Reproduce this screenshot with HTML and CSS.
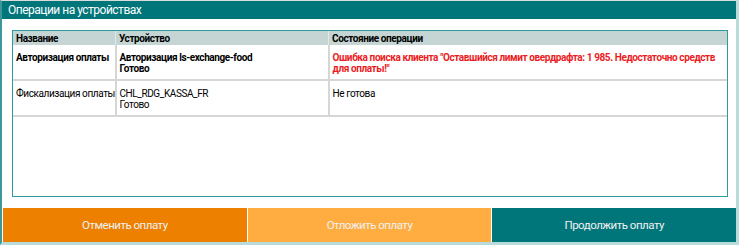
FILE: index.html
```html
<!DOCTYPE html>
<html lang="ru">

<head>
    <meta charset="UTF-8">
    <meta name="viewport" content="width=device-width, initial-scale=1.0">
    <title>Операции на устройствах</title>
    <link rel="stylesheet" href="styles.css">
</head>

<body>
    <div class="dialog">
        <div class="dialog-title">Операции на устройствах</div>

        <div class="dialog-body">
            <div class="ops-box">
                <table class="ops-table">
                    <thead>
                        <tr>
                            <th class="col-name">Название</th>
                            <th class="col-device">Устройство</th>
                            <th>Состояние операции</th>
                        </tr>
                    </thead>
                    <tbody>
                        <tr>
                            <td class="is-bold">Авторизация оплаты</td>
                            <td class="is-bold">Авторизация ls-exchange-food<br>Готово</td>
                            <td class="is-error">Ошибка поиска клиента "Оставшийся лимит овердрафта: 1 985. Недостаточно средств для оплаты!"</td>
                        </tr>
                        <tr>
                            <td>Фискализация оплаты</td>
                            <td>CHL_RDG_KASSA_FR<br>Готово</td>
                            <td>Не готова</td>
                        </tr>
                    </tbody>
                </table>
            </div>
        </div>

        <div class="dialog-buttons">
            <button class="action-btn cancel-btn">Отменить оплату</button>
            <button class="action-btn delay-btn">Отложить оплату</button>
            <button class="action-btn continue-btn">Продолжить оплату</button>
        </div>
    </div>
</body>

</html>
```

FILE: styles.css
```css
body {
    margin: 0;
    font-family: Roboto, "Noto Sans", sans-serif;
    background-color: white;
}

.dialog {
    width: 734px;
    height: 241px;
    border-top: 1px solid rgb(220, 220, 220);
    border-left: 2px solid rgb(60, 150, 154);
    border-right: 3px solid rgb(184, 220, 220);
    border-bottom: 3px solid rgb(184, 220, 220);
    display: flex;
    flex-direction: column;
}

.dialog-title {
    height: 18px;
    background-color: rgb(0, 118, 123);
    color: white;
    font-size: 12px;
    letter-spacing: -0.5px;
    line-height: 18px;
    padding-left: 6px;
}

.dialog-body {
    padding: 11px 8px 0 10px;
    height: 168px;
}

.ops-box {
    height: 165px;
    border: 1px solid rgb(47, 154, 158);
}

.ops-table {
    width: 100%;
    table-layout: fixed;
    border-collapse: collapse;
    font-size: 10px;
    letter-spacing: -0.4px;
    color: black;
}

.ops-table th {
    background-color: rgb(197, 213, 212);
    text-align: left;
    font-weight: bold;
    height: 14px;
    padding: 0 3px;
    border-left: 1px solid rgb(225, 232, 232);
}

.ops-table th:first-child,
.ops-table td:first-child {
    border-left: none;
    padding-right: 0;
    white-space: nowrap;
}

.col-name {
    width: 99px;
}

.col-device {
    width: 206px;
}

.ops-table td {
    vertical-align: top;
    line-height: 11px;
    height: 23px;
    padding: 7px 3px 4px 3px;
    border-left: 2px solid rgb(214, 214, 214);
    border-bottom: 2px solid rgb(214, 214, 214);
}

.is-bold {
    font-weight: bold;
}

.is-error {
    color: rgb(236, 28, 36);
    font-weight: bold;
}

.dialog-buttons {
    display: flex;
    gap: 1px;
    padding-left: 1px;
    margin-top: auto;
    height: 34px;
}

.action-btn {
    flex: 1;
    border: none;
    color: rgb(240, 240, 240);
    font-family: inherit;
    font-size: 11.5px;
    letter-spacing: -0.5px;
    cursor: pointer;
}

.cancel-btn {
    background-color: rgb(238, 128, 0);
}

.delay-btn {
    background-color: rgb(255, 173, 64);
}

.continue-btn {
    background-color: rgb(0, 118, 123);
}
```
